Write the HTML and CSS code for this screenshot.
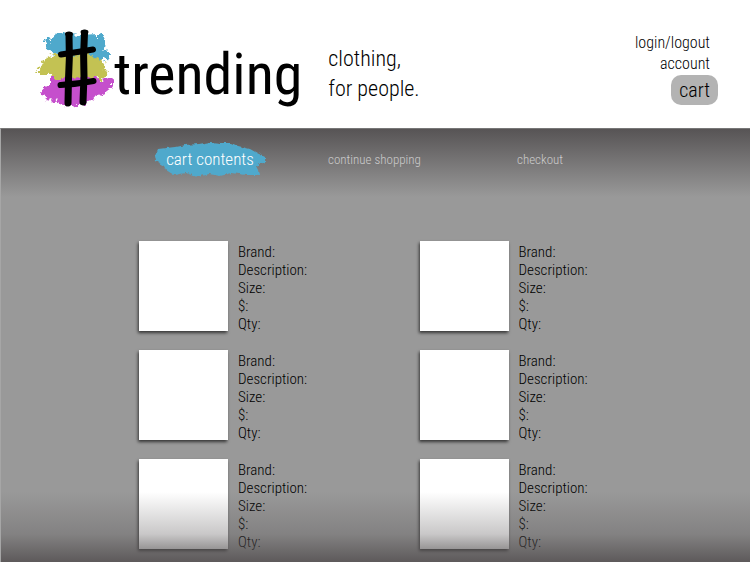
FILE: index.html
```html
<!DOCTYPE html>
<html lang="en">
<head>
<meta charset="utf-8">
<meta name="viewport" content="width=device-width, initial-scale=1">
<title>#trending – cart</title>
<link rel="stylesheet" href="styles.css">
</head>
<body>
<header class="header">
  <a class="logo" href="#">
    <svg class="logo-mark" viewBox="30 20 84 92" role="img" aria-label="#">
      <defs>
        <filter id="rough" x="-10%" y="-20%" width="120%" height="140%">
          <feTurbulence type="fractalNoise" baseFrequency="0.18" numOctaves="4" seed="4" result="n"/>
          <feDisplacementMap in="SourceGraphic" in2="n" scale="11" xChannelSelector="R" yChannelSelector="G"/>
        </filter>
      </defs>
      <g filter="url(#rough)">
        <path fill="#c3c253" d="M48 57 L57 53 L100 53 L105 58 L104 66 L108 73 L104 78 L87 79 L54 78 L46 73 L36 73 L40 67 L43 61 Z"/>
        <path fill="#50a9cc" d="M44 39 L51 37 L59 33 L70 34 L80 35 L98 34 L105 40 L104 49 L109 54 L108 59 L101 61 L94 58 L88 53 L61 54 L50 53 L46 48 L49 44 Z"/>
        <path fill="#c54fcc" d="M51 78 L66 78 L84 77 L96 76 L99 80 L112 78 L112 85 L107 93 L98 95 L92 102 L79 105 L68 106 L56 101 L45 98 L41 92 L44 86 L51 85 Z"/>
      </g>
      <g fill="none" stroke="#000" stroke-linecap="round">
        <path stroke-width="7" d="M69 35 Q70 58 68.500 79 L68 103"/>
        <path stroke-width="7" d="M84.500 33 Q83 55 84 76 L83 102"/>
        <path stroke-width="4" d="M67 34 L71 34 M82.500 32 L86.500 32"/>
        <path stroke-width="6" d="M61 54.500 Q78 52 93 49.500"/>
        <path stroke-width="6" d="M60.500 85 Q78 84 93.500 81"/>
      </g>
    </svg>
    <span class="wordmark">trending</span>
  </a>
  <p class="tagline">clothing,<br>for people.</p>
  <nav class="account" aria-label="Account">
    <a href="#">login/logout</a>
    <a href="#">account</a>
    <a class="cart" href="#">cart</a>
  </nav>
</header>
<main class="main">
  <nav class="steps" aria-label="Cart">
    <a class="current" href="#" aria-current="page">
      <svg class="brush" viewBox="0 0 112 38" preserveAspectRatio="none" aria-hidden="true">
        <defs>
          <filter id="edge" x="-5%" y="-10%" width="110%" height="120%">
            <feTurbulence type="fractalNoise" baseFrequency="0.2" numOctaves="2" seed="8" result="n"/>
            <feDisplacementMap in="SourceGraphic" in2="n" scale="4" xChannelSelector="R" yChannelSelector="G"/>
          </filter>
        </defs>
        <path filter="url(#edge)" fill="#50a9cc" d="M4 9 L21 7 L31 5 L45 4 L56 2 L67 3 L77 3 L84 6 L96 9 L103 13 L111 17 L111 22 L102 26 L104 30 L105 35 L92 35 L78 33 L66 36 L55 34 L43 37 L32 33 L20 35 L12 30 L10 26 L2 21 L1 16 Z"/>
      </svg>
      <span class="label">cart contents</span>
    </a>
    <a href="#">continue shopping</a>
    <a href="#">checkout</a>
  </nav>
  <ul class="items">
    <li class="item"><div class="photo"></div><div class="details"><p>Brand:</p><p>Description:</p><p>Size:</p><p>$:</p><p>Qty:</p></div></li>
    <li class="item"><div class="photo"></div><div class="details"><p>Brand:</p><p>Description:</p><p>Size:</p><p>$:</p><p>Qty:</p></div></li>
    <li class="item"><div class="photo"></div><div class="details"><p>Brand:</p><p>Description:</p><p>Size:</p><p>$:</p><p>Qty:</p></div></li>
    <li class="item"><div class="photo"></div><div class="details"><p>Brand:</p><p>Description:</p><p>Size:</p><p>$:</p><p>Qty:</p></div></li>
    <li class="item"><div class="photo"></div><div class="details"><p>Brand:</p><p>Description:</p><p>Size:</p><p>$:</p><p>Qty:</p></div></li>
    <li class="item"><div class="photo"></div><div class="details"><p>Brand:</p><p>Description:</p><p>Size:</p><p>$:</p><p>Qty:</p></div></li>
  </ul>
</main>
</body>
</html>
```
FILE: styles.css
```css
* {
  box-sizing: border-box;
}

body {
  margin: 0;
  min-height: 100vh;
  display: flex;
  flex-direction: column;
  background: #fff;
  color: #000;
  font-family: "Roboto Condensed", "Liberation Sans Narrow", "DejaVu Sans Condensed", sans-serif;
  font-size: 15px;
  font-weight: 300;
}

a {
  color: inherit;
  text-decoration: none;
}

p,
ul {
  margin: 0;
  padding: 0;
}

.header {
  display: flex;
  align-items: flex-start;
  padding: 20px 32px 16px 30px;
}

.logo {
  display: flex;
  align-items: center;
}

.logo-mark {
  width: 84px;
  height: 92px;
}

.wordmark {
  font-size: 58px;
  font-weight: 400;
  line-height: 92px;
  padding-top: 8px;
  margin-bottom: -8px;
}

.tagline {
  margin-left: 26px;
  padding-top: 24px;
  font-size: 22px;
  line-height: 30px;
}

.account {
  margin-left: auto;
  padding-top: 12px;
  display: flex;
  flex-direction: column;
  align-items: flex-end;
  font-size: 16px;
  line-height: 21px;
}

.account a {
  margin-right: 8px;
}

.account .cart {
  margin: 1px 0 0;
  padding: 0 8px;
  border-radius: 10px;
  background: #b3b3b3;
  font-size: 20px;
  line-height: 30px;
}

.main {
  position: relative;
  flex: 1;
  padding-bottom: 11px;
  border-top: 1px solid #777;
  border-left: 1px solid #a6a6a6;
  background: linear-gradient(#575455, #999 68px);
}

.main::after {
  content: "";
  position: absolute;
  inset: auto 0 0;
  height: 70px;
  background: linear-gradient(rgba(83, 79, 80, 0), rgba(83, 79, 80, 0.35) 60%, rgba(83, 79, 80, 0.95));
  opacity: 0.9;
  pointer-events: none;
}

.steps {
  display: grid;
  grid-template-columns: 174px 189px auto;
  align-items: center;
  padding: 11px 0 0 153px;
  color: #ccc;
  font-size: 13px;
}

.current {
  display: grid;
  width: 112px;
  color: #fff;
  font-size: 17px;
  line-height: 38px;
  text-align: center;
}

.brush,
.label {
  grid-area: 1 / 1;
}

.brush {
  width: 100%;
  height: 38px;
}

.label {
  z-index: 1;
}

.items {
  display: grid;
  grid-template-columns: 1fr 1fr;
  gap: 17px 0;
  padding: 63px 50px 0 138px;
  list-style: none;
}

.item {
  display: flex;
  gap: 10px;
}

.photo {
  width: 89px;
  height: 90px;
  background: #fff;
  box-shadow: -1px 2px 3px rgba(0, 0, 0, 0.65);
}

.details {
  padding-top: 2px;
  line-height: 18px;
}
```
